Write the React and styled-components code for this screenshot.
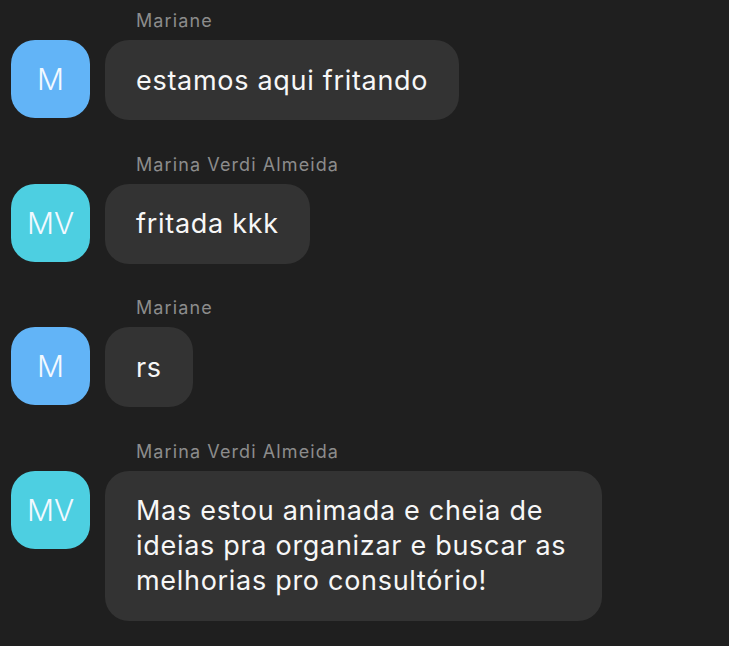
import styled, { createGlobalStyle } from "styled-components";

const GlobalStyle = createGlobalStyle`
  html, body {
    margin: 0;
    padding: 0;
    background: #1f1f1f;
  }
  * { box-sizing: border-box; }
`;

const Page = styled.div`
  min-height: 100vh;
  background: #1f1f1f;
  padding: 10px 0 0 11px;
  font-family: Inter, "Liberation Sans", sans-serif;
`;

const Group = styled.div`
  margin-bottom: 33.5px;
`;

const Name = styled.div`
  padding-left: 125px;
  font-size: 18px;
  line-height: 22px;
  color: #8c8c8c;
  margin-bottom: 8px;
  letter-spacing: 1.1px;
`;

const Row = styled.div`
  display: flex;
  align-items: flex-start;
  gap: 15px;
`;

const Avatar = styled.div`
  width: 79px;
  height: 78px;
  flex: none;
  border-radius: 24px;
  background: ${(p) => p.color};
  display: flex;
  align-items: center;
  justify-content: center;
  color: #f2f9ff;
  font-size: 30px;
  font-weight: 300;
`;

const Bubble = styled.div`
  background: #333333;
  border-radius: 24px;
  padding: 22.5px 31px;
  max-width: 497px;
  color: #f7f7f7;
  font-size: 27px;
  line-height: 35px;
  letter-spacing: 0.7px;
`;

const messages = [
  { name: "Mariane", initials: "M", color: "#62b4f7", text: "estamos aqui fritando" },
  { name: "Marina Verdi Almeida", initials: "MV", color: "#4dcfe1", text: "fritada kkk" },
  { name: "Mariane", initials: "M", color: "#62b4f7", text: "rs" },
  {
    name: "Marina Verdi Almeida",
    initials: "MV",
    color: "#4dcfe1",
    text: "Mas estou animada e cheia de ideias pra organizar e buscar as melhorias pro consultório!",
  },
];

const App = () => {
  return (
    <Page>
      <GlobalStyle />
      {messages.map((m, i) => (
        <Group key={i}>
          <Name>{m.name}</Name>
          <Row>
            <Avatar color={m.color}>{m.initials}</Avatar>
            <Bubble>{m.text}</Bubble>
          </Row>
        </Group>
      ))}
    </Page>
  );
};

export default App;
